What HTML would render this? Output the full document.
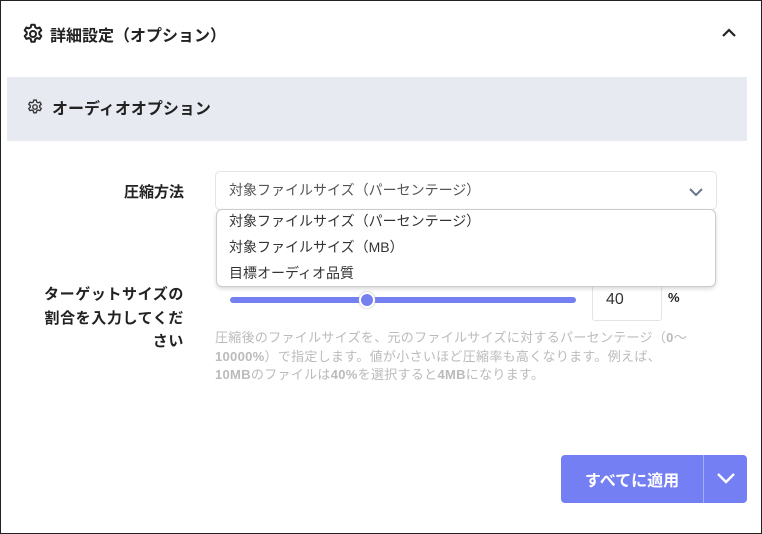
<!DOCTYPE html><html><head><meta charset="utf-8"><style>
body{margin:0;width:762px;height:534px;overflow:hidden;background:#fff;font-family:"Liberation Sans","Noto Sans CJK JP",sans-serif;}
.frame{position:absolute;left:0;top:0;width:760px;height:532px;border:1px solid #222;}
.a{position:absolute;}
</style></head><body>
<div class="frame"></div>
<svg class="a" style="left:21px;top:22px" width="24" height="24" viewBox="0 0 24 24" fill="none" stroke="#222" stroke-width="2" stroke-linejoin="round"><path d="M10.3 2.7h3.4l.5 2.6 1.9 1.1 2.5-.9 1.7 2.9-2 1.7v2.2l2 1.7-1.7 2.9-2.5-.9-1.9 1.1-.5 2.6h-3.4l-.5-2.6-1.9-1.1-2.5.9-1.7-2.9 2-1.7v-2.2l-2-1.7 1.7-2.9 2.5.9 1.9-1.1z"/><circle cx="12" cy="12" r="3"/></svg>
<div class="a" style="left:50px;top:22px;font-size:16px;font-weight:bold;color:#222">詳細設定（オプション）</div>
<svg class="a" style="left:721px;top:27px" width="16" height="12" viewBox="0 0 16 12" fill="none" stroke="#222" stroke-width="2.2"><path d="M2 9l6-6 6 6"/></svg>
<div class="a" style="left:7px;top:77px;width:740px;height:64px;background:#e8eaf2"></div>
<svg class="a" style="left:26px;top:98px" width="18" height="18" viewBox="0 0 24 24" fill="none" stroke="#333" stroke-width="1.8" stroke-linejoin="round"><path d="M10.3 2.7h3.4l.5 2.6 1.9 1.1 2.5-.9 1.7 2.9-2 1.7v2.2l2 1.7-1.7 2.9-2.5-.9-1.9 1.1-.5 2.6h-3.4l-.5-2.6-1.9-1.1-2.5.9-1.7-2.9 2-1.7v-2.2l-2-1.7 1.7-2.9 2.5.9 1.9-1.1z"/><circle cx="12" cy="12" r="3"/></svg>
<div class="a" style="left:52px;top:95px;font-size:16px;font-weight:bold;color:#222">オーディオオプション</div>
<div class="a" style="left:60px;top:181px;width:124px;text-align:right;font-size:15px;font-weight:bold;color:#222">圧縮方法</div>
<div class="a" style="left:215px;top:171px;width:500px;height:37px;border:1px solid #e2e4ea;border-radius:5px"></div>
<div class="a" style="left:229px;top:180px;font-size:14px;color:#555">対象ファイルサイズ（パーセンテージ）</div>
<svg class="a" style="left:688px;top:187px" width="16" height="10" viewBox="0 0 16 10" fill="none" stroke="#6b7390" stroke-width="2"><path d="M2 2l6 6 6-6"/></svg>
<div class="a" style="left:20px;top:283px;width:164px;text-align:right;font-size:15px;font-weight:bold;color:#222;line-height:23.5px;letter-spacing:0.6px">ターゲットサイズの<br>割合を入力してくだ<br>さい</div>
<div class="a" style="left:230px;top:297px;width:346px;height:6px;border-radius:3px;background:#7480f0"></div>
<div class="a" style="left:359px;top:292px;width:12px;height:12px;border-radius:50%;background:#7480f0;border:2px solid #fff;box-shadow:0 0 2px #aaa"></div>
<div class="a" style="left:592px;top:283px;width:68px;height:36px;border:1px solid #e2e4ea;border-radius:3px"></div>
<div class="a" style="left:606px;top:291px;font-size:16px;color:#333">40</div>
<div class="a" style="left:668px;top:290px;font-size:13px;font-weight:bold;color:#222">%</div>
<div class="a" style="left:215px;top:329px;width:540px;font-size:13px;color:#bbb;line-height:18.5px;letter-spacing:0.3px;white-space:nowrap">圧縮後のファイルサイズを、元のファイルサイズに対するパーセンテージ（<b>0</b>〜<br><b>10000%</b>）で指定します。値が小さいほど圧縮率も高くなります。例えば、<br><b>10MB</b>のファイルは<b>40%</b>を選択すると<b>4MB</b>になります。</div>
<div class="a" style="left:216px;top:209px;width:500px;height:78px;border:1px solid #ccc;border-radius:6px;background:#fff;box-shadow:0 2px 4px rgba(0,0,0,.15);font-size:14px;color:#333;line-height:26px;padding-left:12px;box-sizing:border-box"><div style="margin-top:-2px">対象ファイルサイズ（パーセンテージ）</div><div>対象ファイルサイズ（MB）</div><div>目標オーディオ品質</div></div>
<div class="a" style="left:561px;top:455px;width:186px;height:48px;border-radius:4px;background:#737ff3"></div>
<div class="a" style="left:703px;top:455px;width:1px;height:48px;background:#a5adf7"></div>
<div class="a" style="left:561px;top:467px;width:142px;text-align:center;font-size:16px;font-weight:bold;color:#fff">すべてに適用</div>
<svg class="a" style="left:716px;top:472px" width="20" height="13" viewBox="0 0 20 13" fill="none" stroke="#fff" stroke-width="2.4"><path d="M2 2l8 8 8-8"/></svg>
</body></html>
